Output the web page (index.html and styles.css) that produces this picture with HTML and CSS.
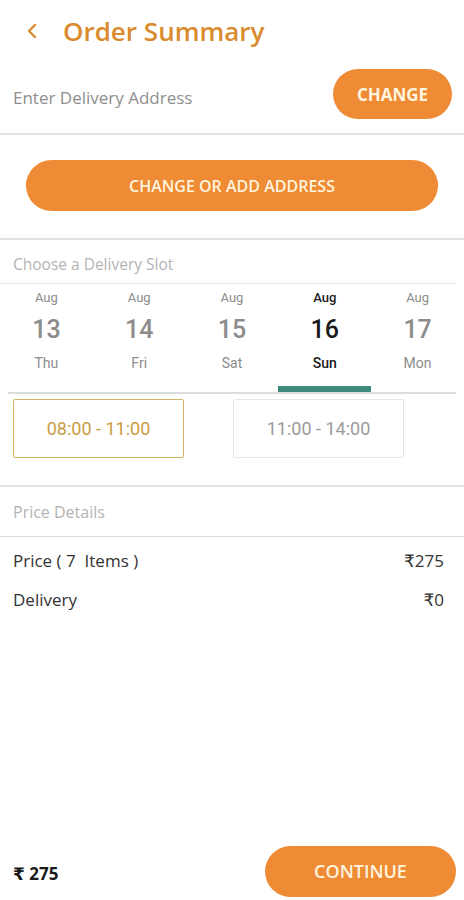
FILE: index.html
```html
<!DOCTYPE html>
<html lang="en">
<head>
  <meta charset="UTF-8" />
  <meta name="viewport" content="width=device-width, initial-scale=1.0"/>
  <title>Order Summary</title>
  <link rel="stylesheet" href="styles.css">
</head>
<body>
  <div class="page">
    <div class="header">
      <svg class="back" width="14" height="18" viewBox="0 0 14 18">
        <path d="M10 3 L4 9 L10 15" fill="none" stroke="#d98b2e" stroke-width="2.4" stroke-linecap="round" stroke-linejoin="round"/>
      </svg>
      <h1>Order Summary</h1>
    </div>

    <div class="address-row">
      <span class="address-text">Enter Delivery Address</span>
      <button type="button" class="pill pill-small">CHANGE</button>
    </div>

    <div class="add-address">
      <button type="button" class="pill pill-wide">CHANGE OR ADD ADDRESS</button>
    </div>

    <div class="section-label slot-label">Choose a Delivery Slot</div>

    <div class="date-strip">
      <div class="date-tabs">
        <div class="tab"><span class="month">Aug</span><span class="day-num">13</span><span class="weekday">Thu</span></div>
        <div class="tab"><span class="month">Aug</span><span class="day-num">14</span><span class="weekday">Fri</span></div>
        <div class="tab"><span class="month">Aug</span><span class="day-num">15</span><span class="weekday">Sat</span></div>
        <div class="tab active"><span class="month">Aug</span><span class="day-num">16</span><span class="weekday">Sun</span></div>
        <div class="tab"><span class="month">Aug</span><span class="day-num">17</span><span class="weekday">Mon</span></div>
      </div>
    </div>

    <div class="slots">
      <div class="slot selected">08:00 - 11:00</div>
      <div class="slot">11:00 - 14:00</div>
    </div>

    <div class="section-label price-label">Price Details</div>

    <div class="price-rows">
      <div class="price-row"><span>Price ( 7&nbsp; Items )</span><span>₹275</span></div>
      <div class="price-row"><span>Delivery</span><span>₹0</span></div>
    </div>

    <div class="footer">
      <span class="total">₹ 275</span>
      <button type="button" class="pill pill-continue">CONTINUE</button>
    </div>
  </div>
</body>
</html>
```

FILE: styles.css
```css
body {
  margin: 0;
  padding: 0;
  font-family: 'Open Sans', 'DejaVu Sans', sans-serif;
  background-color: #ffffff;
  color: #333;
}
.page {
  width: 464px;
  height: 900px;
  display: flex;
  flex-direction: column;
  overflow: hidden;
}
.header {
  height: 64px;
  display: flex;
  align-items: center;
  padding-left: 25px;
  padding-bottom: 2px;
  box-sizing: border-box;
}
.header .back {
  margin-right: 24px;
}
h1 {
  margin: 0;
  font-size: 26px;
  font-weight: 600;
  color: #d98b2e;
}
.pill {
  border: none;
  border-radius: 30px;
  background-color: #ee8b34;
  color: #fff4df;
  font-family: 'Open Sans', sans-serif;
  font-weight: 700;
  cursor: pointer;
  padding: 0;
}
.address-row {
  height: 71px;
  display: flex;
  align-items: flex-start;
  justify-content: space-between;
  padding: 0 12px 0 13px;
  box-sizing: border-box;
  border-bottom: 2px solid #e3e3e3;
}
.address-text {
  font-size: 17px;
  color: #8e8e8e;
  margin-top: 22px;
}
.pill-small {
  width: 119px;
  height: 50px;
  margin-top: 5px;
  font-size: 17px;
}
.add-address {
  height: 105px;
  padding: 25px 26px 0;
  box-sizing: border-box;
  border-bottom: 2px solid #e3e3e3;
}
.pill-wide {
  width: 412px;
  height: 51px;
  font-size: 16px;
  font-weight: 600;
}
.section-label {
  font-size: 15.5px;
  color: #b4b4b4;
  padding-left: 13px;
  display: flex;
  align-items: center;
  box-sizing: border-box;
}
.slot-label {
  height: 44px;
  padding-top: 5px;
  margin: 0 8px 0 0;
  border-bottom: 1px solid #e6e6e6;
}
.date-strip {
  margin: 0 8px;
  border-bottom: 2px solid #dcdcdc;
}
.date-tabs {
  display: flex;
  margin: 0 -8px;
  font-family: Roboto, sans-serif;
}
.tab {
  flex: 1;
  height: 108px;
  display: flex;
  flex-direction: column;
  align-items: center;
  box-sizing: border-box;
  padding-top: 6px;
  color: #8c8c8c;
}
.tab.active {
  color: #1a1a1a;
  border-bottom: 6px solid #3f8b7b;
}
.month {
  font-size: 13px;
  line-height: 16px;
}
.day-num {
  font-size: 25px;
  font-weight: 500;
  line-height: 32px;
  margin-top: 8px;
}
.weekday {
  font-size: 14px;
  line-height: 18px;
  margin-top: 8px;
}
.tab.active .month,
.tab.active .weekday {
  font-weight: 500;
}
.slots {
  height: 93px;
  display: flex;
  gap: 49px;
  padding: 5px 0 0 13px;
  box-sizing: border-box;
  border-bottom: 2px solid #e3e3e3;
  font-family: Roboto, sans-serif;
}
.slot {
  width: 171px;
  height: 59px;
  box-sizing: border-box;
  border: 1px solid #e6e6e6;
  border-radius: 2px;
  display: flex;
  align-items: center;
  justify-content: center;
  font-size: 18px;
  color: #9a9a9a;
}
.slot.selected {
  border: 1.5px solid #d2b463;
  color: #c99c45;
}
.price-label {
  height: 50px;
  font-size: 16px;
  border-bottom: 1px solid #dcdcdc;
}
.price-rows {
  padding: 4px 20px 0 13px;
}
.price-row {
  display: flex;
  justify-content: space-between;
  height: 39px;
  align-items: center;
  font-size: 17px;
  color: #333;
}
.footer {
  margin-top: auto;
  height: 54px;
  margin-bottom: 2px;
  display: flex;
  justify-content: space-between;
  align-items: center;
  padding: 0 8px 0 13px;
}
.total {
  font-size: 17px;
  font-weight: 700;
  color: #1a1a1a;
  padding-top: 4px;
}
.pill-continue {
  width: 191px;
  height: 51px;
  font-size: 18px;
  font-weight: 600;
}
```
